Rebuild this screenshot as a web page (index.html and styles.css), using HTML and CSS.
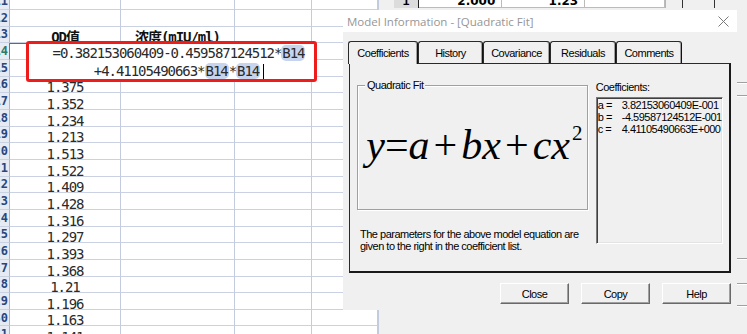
FILE: index.html
```html
<!DOCTYPE html>
<html lang="zh-CN">
<head>
  <meta charset="UTF-8">
  <title>Model Information - [Quadratic Fit]</title>
  <link rel="stylesheet" href="styles.css">
</head>
<body>

  <!-- ──────────  SPREADSHEET  ────────── -->
  <div class="sheet">
    <div class="row"><span class="rh">11</span><span></span><span></span><span></span><span></span></div>
    <div class="row"><span class="rh">12</span><span></span><span></span><span></span><span></span></div>
    <div class="row"><span class="rh">13</span><span class="head">OD值</span><span class="head">浓度(mIU/ml)</span><span></span><span></span></div>
    <div class="row sel"><span class="rh">14</span><span class="active"></span><span></span><span></span><span></span></div>
    <div class="row"><span class="rh">15</span><span></span><span></span><span></span><span></span></div>
    <div class="row"><span class="rh">16</span><span>1.375</span><span></span><span></span><span></span></div>
    <div class="row"><span class="rh">17</span><span>1.352</span><span></span><span></span><span></span></div>
    <div class="row"><span class="rh">18</span><span>1.234</span><span></span><span></span><span></span></div>
    <div class="row"><span class="rh">19</span><span>1.213</span><span></span><span></span><span></span></div>
    <div class="row"><span class="rh">20</span><span>1.513</span><span></span><span></span><span></span></div>
    <div class="row"><span class="rh">21</span><span>1.522</span><span></span><span></span><span></span></div>
    <div class="row"><span class="rh">22</span><span>1.409</span><span></span><span></span><span></span></div>
    <div class="row"><span class="rh">23</span><span>1.428</span><span></span><span></span><span></span></div>
    <div class="row"><span class="rh">24</span><span>1.316</span><span></span><span></span><span></span></div>
    <div class="row"><span class="rh">25</span><span>1.297</span><span></span><span></span><span></span></div>
    <div class="row"><span class="rh">26</span><span>1.393</span><span></span><span></span><span></span></div>
    <div class="row"><span class="rh">27</span><span>1.368</span><span></span><span></span><span></span></div>
    <div class="row"><span class="rh">28</span><span>1.21</span><span></span><span></span><span></span></div>
    <div class="row"><span class="rh">29</span><span>1.196</span><span></span><span></span><span></span></div>
    <div class="row"><span class="rh">30</span><span>1.163</span><span></span><span></span><span></span></div>
    <div class="row"><span class="rh">31</span><span>1.141</span><span></span><span></span><span></span></div>
  </div>

  <!-- in-cell formula editor, boxed in red -->
  <div class="editor">
    <div class="formula">=0.382153060409-0.459587124512*<span class="ref">B14</span></div>
    <div class="formula">+4.41105490663*<span class="ref">B14</span>*<span class="ref">B14</span><span class="caret"></span></div>
  </div>

  <!-- ──────────  WINDOW BEHIND THE DIALOG  ────────── -->
  <div class="bgwin">
    <div class="strip">
      <span class="gap"></span>
      <span class="num">1</span>
      <span class="cell">2.000</span>
      <span class="cell">1.23</span>
      <span class="cell wide"></span>
      <span class="tool"></span>
      <span class="tool dark"></span>
      <span class="tool dark"></span>
    </div>
    <div class="edge">
      <hr class="t1"><hr class="t2"><hr class="t3"><hr class="t4"><hr class="t5">
    </div>
  </div>

  <!-- ──────────  MODEL INFORMATION DIALOG  ────────── -->
  <div class="dialog">
    <div class="titlebar">
      <span>Model Information - [Quadratic Fit]</span>
      <svg class="close" width="11" height="11" viewBox="0 0 11 11">
        <path d="M0.5 0.5 L10.5 10.5 M10.5 0.5 L0.5 10.5" stroke="#7a7a7a" stroke-width="1" fill="none"/>
      </svg>
    </div>

    <div class="tabs">
      <div class="tab active" style="width:70px">Coefficients</div>
      <div class="tab" style="width:65px">History</div>
      <div class="tab" style="width:67px">Covariance</div>
      <div class="tab" style="width:66px">Residuals</div>
      <div class="tab" style="width:66px">Comments</div>
    </div>

    <div class="panel">
      <div class="left">
        <div class="group">
          <span class="legend">Quadratic Fit</span>
          <div class="eq"><i>y</i><span class="op">=</span><i>a</i><span class="op pad">+</span><i>b</i><i>x</i><span class="op pad">+</span><i>c</i><i>x</i><sup>2</sup></div>
        </div>
        <p class="note">The parameters for the above model equation are given to the right in the coefficient list.</p>
      </div>
      <div class="right">
        <div class="label">Coefficients:</div>
        <div class="listbox">
          <span>a =</span><span>3.82153060409E-001</span>
          <span>b =</span><span>-4.59587124512E-001</span>
          <span>c =</span><span>4.41105490663E+000</span>
        </div>
      </div>
    </div>

    <div class="buttons">
      <button>Close</button>
      <button>Copy</button>
      <button>Help</button>
    </div>
  </div>

</body>
</html>
```

FILE: styles.css
```css
/* Page */
html, body {
  margin: 0;
  padding: 0;
}
body {
  position: relative;
  width: 747px;
  height: 334px;
  overflow: hidden;
  background: #f0f0f0;
  font-family: "Liberation Sans", Arial, sans-serif;
}

/* Spreadsheet grid */
.sheet {
  width: 378px;
  margin-top: -6.667px;
  background: #fff;
  font-family: "DejaVu Sans Mono", "Noto Sans CJK SC", monospace;
  font-size: 14px;
  letter-spacing: -1.05px;
  color: #2a2a2a;
}
.row {
  display: grid;
  grid-template-columns: 10px 111px 114px 77px 66px;
  height: 16.667px;
}
.row > span {
  box-sizing: border-box;
  display: flex;
  align-items: flex-end;
  justify-content: center;
  line-height: 8px;
  padding-bottom: 1px;
  white-space: nowrap;
  border-right: 1px solid #c3cbde;
  border-bottom: 1px solid #c9d1e3;
}
.row .rh {
  justify-content: flex-end;
  align-items: center;
  overflow: hidden;
  padding: 0 1px 0 0;
  background: #e5eaf3;
  border-right-color: #a8b7cf;
  border-bottom-color: #c9d2e2;
  color: #27467e;
  font-size: 12px;
  line-height: 14px;
  letter-spacing: 0;
  font-weight: bold;
}
.row.sel .rh {
  border-right: 1px solid #3b9a5a;
  color: #2a7a6a;
}
.row .head {
  font-weight: bold;
  color: #111;
}
.row .active {
  box-shadow: inset 0 1px 0 #3d6cc0;
}

/* Formula editor overlay */
.editor {
  position: absolute;
  left: 26px;
  top: 41px;
  width: 291px;
  height: 41px;
  box-sizing: border-box;
  padding: 1px 0 0 15px;
  border: 3px solid #ef1c1c;
  border-radius: 3px;
  background: #fff;
  font-family: "DejaVu Sans Mono", monospace;
  font-size: 14px;
  letter-spacing: -1.05px;
  line-height: 17.5px;
  text-align: center;
  color: #2a2a2a;
}
.formula {
  height: 17.5px;
}
.formula .ref {
  background: #c7d4ee;
  border-radius: 5px;
  padding: 0 1px;
}
.caret {
  display: inline-block;
  width: 1px;
  height: 15px;
  margin-left: 3px;
  background: #000;
  vertical-align: -3px;
}

/* Window behind the dialog */
.bgwin {
  position: absolute;
  left: 378px;
  top: 0;
  right: 0;
  bottom: 0;
  background: #f0f0f0;
  border-left: 1px solid #c3cbde;
}
.strip {
  display: flex;
  height: 8px;
  overflow: hidden;
  font-size: 12px;
  line-height: 2px;
}
.strip span {
  box-sizing: border-box;
  height: 8px;
}
.strip .gap { width: 15px; }
.strip .num {
  width: 26px;
  background: #dcdcdc;
  border-right: 1px solid #222;
  text-align: center;
  font-weight: bold;
}
.strip .cell {
  width: 84px;
  background: #fff;
  border-right: 1px solid #bbb;
  border-bottom: 1px solid #bbb;
  text-align: right;
  padding-right: 6px;
  font-family: "DejaVu Sans", sans-serif;
  font-weight: bold;
}
.strip .wide { width: 81px; }
.strip .tool { width: 17px; border-left: 1px solid #b5b5b5; }
.strip .dark { width: 33px; border-left: 1px solid #333; }
.edge {
  position: absolute;
  right: 0;
  top: 0;
  width: 10px;
  height: 100%;
}
.edge hr {
  margin: 0;
  border: 0;
  height: 1px;
  background: #a0a0a0;
  box-shadow: 0 1px 0 #fff;
}
.edge .t1 { margin-top: 82px; }
.edge .t2 { margin-top: 12px; }
.edge .t3 { margin-top: 162px; }
.edge .t4 { margin-top: 24px; }
.edge .t5 { margin-top: 21px; }

/* Dialog */
.dialog {
  position: absolute;
  left: 343px;
  top: 10px;
  width: 394px;
  height: 300px;
  display: flex;
  flex-direction: column;
  background: #f0f0f0;
  font-size: 11px;
  letter-spacing: -0.5px;
  color: #000;
}
.titlebar {
  height: 22px;
  display: flex;
  align-items: center;
  justify-content: space-between;
  padding: 0 8px 0 4px;
  background: #fff;
  color: #969696;
  font-family: "Open Sans", sans-serif;
  font-size: 11.5px;
  letter-spacing: 0;
}
.close { display: block; }

/* Tabs */
.tabs {
  display: flex;
  height: 22px;
  margin: 9px 0 0 5px;
  position: relative;
  z-index: 1;
}
.tab {
  box-sizing: border-box;
  display: flex;
  align-items: center;
  justify-content: center;
  border: 1px solid #2a2a2a;
  border-bottom: none;
  border-right-color: #111;
  border-radius: 3px 3px 0 0;
  box-shadow: inset -1px 0 0 #a0a0a0;
}
.tab.active {
  height: 23px;
  background: #f0f0f0;
}

/* Tab panel */
.panel {
  box-sizing: border-box;
  width: 382px;
  height: 210px;
  margin-left: 6px;
  display: flex;
  gap: 8px;
  padding: 21px 6px 0 7px;
  border: 1px solid #2a2a2a;
  border-right: 2px solid #1a1a1a;
  border-bottom: 2px solid #1a1a1a;
}
.left {
  width: 232px;
}
.group {
  position: relative;
  box-sizing: border-box;
  height: 125px;
  display: flex;
  align-items: center;
  justify-content: center;
  border: 1px solid #a0a0a0;
  box-shadow: inset 1px 1px 0 #fff, 1px 1px 0 #fff;
}
.legend {
  position: absolute;
  left: 7px;
  top: -7px;
  padding: 0 2px;
  line-height: 12px;
  background: #f0f0f0;
}
.eq {
  font-family: "Liberation Serif", "Times New Roman", serif;
  font-size: 42px;
  letter-spacing: 0;
  line-height: 42px;
  margin-top: -6px;
  margin-left: 4px;
  color: #000;
}
.eq .op { font-style: normal; }
.eq .pad { margin: 0 4px; }
.eq sup {
  font-size: 21px;
  vertical-align: 19px;
  line-height: 0;
  margin-left: 2px;
}
.note {
  margin: 18px 0 0 3px;
  line-height: 12px;
}

/* Coefficients list */
.right {
  width: 128px;
}
.label {
  line-height: 12px;
  margin-top: -4px;
}
.listbox {
  box-sizing: border-box;
  height: 147px;
  margin-top: 4px;
  display: grid;
  grid-template-columns: 24px auto;
  align-content: start;
  padding: 1px 0 0 1px;
  line-height: 12px;
  border: 1px solid;
  border-color: #7a7a7a #fff #fff #7a7a7a;
  box-shadow: inset 1px 1px 0 #404040, inset -1px -1px 0 #e3e3e3;
}

/* Buttons */
.buttons {
  display: flex;
  justify-content: flex-end;
  gap: 12px;
  margin-top: 10px;
  padding-right: 6px;
}
.buttons button {
  box-sizing: border-box;
  width: 69px;
  height: 21px;
  padding: 0;
  background: #f0f0f0;
  font-family: inherit;
  font-size: 11px;
  letter-spacing: -0.5px;
  color: #000;
  border: 1px solid;
  border-color: #fff #696969 #696969 #fff;
  box-shadow: inset -1px -1px 0 #a0a0a0;
}
```
